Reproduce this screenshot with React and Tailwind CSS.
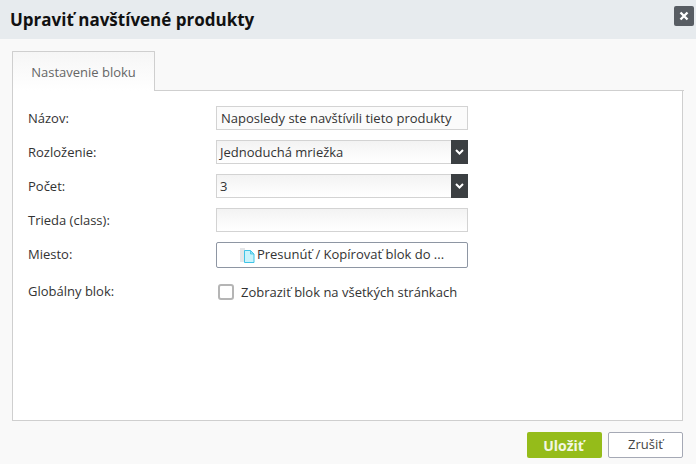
import React from 'react';

const Row = ({ label, children, className = 'h-[24px]', labelClass = 'top-px' }) => (
    <div className={`flex items-center ${className}`}>
        <label className={`relative -ml-px w-[188px] shrink-0 text-[13px] text-[#333] ${labelClass}`}>{label}</label>
        {children}
    </div>
);

const Select = ({ value }) => (
    <div className="flex h-[24px] w-[252px] border border-[#d3d3d3] bg-gradient-to-b from-[#f3f3f3] to-white">
        <span className="flex-1 pl-[3px] text-[13px] leading-[23px] text-[#333]">{value}</span>
        <span className="-my-px -mr-px flex w-[17px] items-center justify-center bg-[#3b3f42]">
            <svg width="9" height="6" viewBox="0 0 9 6">
                <path d="M1 1l3.500 3.500L8 1" fill="none" stroke="#fff" strokeWidth="2" />
            </svg>
        </span>
    </div>
);

export default function App() {
    return (
        <div className="flex h-[464px] w-[696px] flex-col overflow-hidden bg-[#f9f9f9] font-['Open_Sans',sans-serif]">
            {/* Header */}
            <div className="flex h-[39px] shrink-0 items-center justify-between bg-[#e7ebee] pl-[10px] pr-[2px]">
                <h1 className="text-[17px] font-bold text-[#111]">Upraviť navštívené produkty</h1>
                <button className="mt-[-7px] flex h-[20px] w-[20px] items-center justify-center rounded-[2px] bg-[#585d63]">
                    <svg width="10" height="10" viewBox="0 0 10 10">
                        <path d="M1.500 1.500l7 7M8.500 1.500l-7 7" stroke="#fff" strokeWidth="2.400" />
                    </svg>
                </button>
            </div>

            {/* Tabs */}
            <div className="mx-[12px] mt-[12px] flex h-[40px] shrink-0">
                <div className="-mb-px h-[40px] w-[143px] rounded-t-[1px] border border-b-0 border-[#cfcfcf] bg-gradient-to-b from-[#f6f6f6] to-white pt-[11px] text-center text-[13px] text-[#666]">
                    Nastavenie bloku
                </div>
                <div className="flex-1 border-b border-[#cfcfcf]" />
            </div>

            {/* Panel */}
            <div className="mx-[12px] flex h-[330px] w-[671px] shrink-0 flex-col border border-t-0 border-[#cfcfcf] bg-white pl-[16px] pt-[15px]">
                <Row label="Názov:" className="h-[24px]">
                    <input
                        readOnly
                        value="Naposledy ste navštívili tieto produkty"
                        className="h-[24px] w-[252px] border border-[#d3d3d3] bg-[#fbfbfb] pl-[4px] text-[13px] text-[#333] outline-none"
                    />
                </Row>
                <Row label="Rozloženie:" className="mt-[10px] h-[24px]">
                    <Select value="Jednoduchá mriežka" />
                </Row>
                <Row label="Počet:" className="mt-[10px] h-[24px]">
                    <Select value="3" />
                </Row>
                <Row label="Trieda (class):" className="mt-[10px] h-[24px]">
                    <input
                        readOnly
                        className="h-[24px] w-[252px] border border-[#d3d3d3] bg-gradient-to-b from-[#f3f3f3] to-white outline-none"
                    />
                </Row>
                <Row label="Miesto:" className="mt-[10px] h-[26px]" labelClass="top-0">
                    <button className="flex h-[26px] w-[252px] items-center justify-center gap-[1px] rounded-[2px] border border-[#8e96a3] bg-white text-[13px] text-[#333]">
                        <svg width="16" height="17" viewBox="0 0 16 17">
                            <path d="M0 1h5v14H0z" fill="#e4e6e8" />
                            <path d="M4.500 3.500h6l3.500 3.500v8.500H4.500z" fill="#c9f3fb" stroke="#3fc3e6" />
                            <path d="M10.500 3.500v3.500H14z" fill="#8fe0f3" stroke="#3fc3e6" strokeWidth="0.800" />
                        </svg>
                        <span>Presunúť / Kopírovať blok do ...</span>
                    </button>
                </Row>
                <Row label="Globálny blok:" className="mt-[16px] h-[16px]" labelClass="top-0">
                    <span className="ml-[2px] h-[16px] w-[16px] rounded-[3px] border-2 border-[#b5b5b5] bg-white" />
                    <span className="relative top-px ml-[7px] text-[13px] text-[#333]">Zobraziť blok na všetkých stránkach</span>
                </Row>
            </div>

            {/* Footer */}
            <div className="mr-[13px] mt-[11px] flex justify-end gap-[6px]">
                <button className="h-[26px] w-[75px] rounded-[2px] bg-[#95bc1a] pr-[2px] text-[14px] font-bold text-[#f3f7e4]">
                    Uložiť
                </button>
                <button className="h-[26px] w-[75px] rounded-[2px] border border-[#a5a9b5] bg-white text-[13px] text-[#444]">
                    Zrušiť
                </button>
            </div>
        </div>
    );
}
